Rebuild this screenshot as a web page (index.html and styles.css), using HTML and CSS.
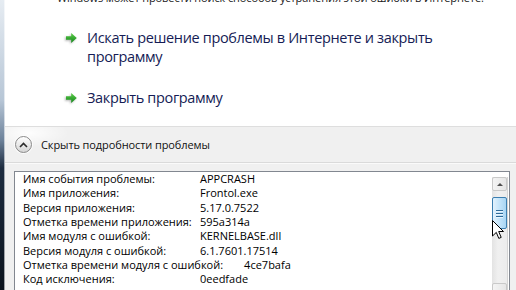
FILE: index.html
```html
<!DOCTYPE html>
<html lang="ru">
<head>
    <meta charset="UTF-8">
    <meta name="viewport" content="width=device-width, initial-scale=1.0">
    <title>Frontol.exe</title>
    <link rel="stylesheet" href="styles.css">
</head>
<body>
    <div class="frame-edge"></div>

    <div class="dialog">
        <div class="intro">Windows может провести поиск способов устранения этой ошибки в Интернете.</div>

        <div class="commands">
            <div class="command">
                <svg class="command-arrow" width="13" height="12" viewBox="0 0 13 12">
                    <defs>
                        <linearGradient id="arrowFill" x1="0" y1="0" x2="0" y2="1">
                            <stop offset="0" stop-color="#5fcf4a"/>
                            <stop offset="1" stop-color="#12861c"/>
                        </linearGradient>
                    </defs>
                    <path d="M1 4.2 H6.2 V1 L11.8 6 L6.2 11 V7.8 H1 Z" fill="url(#arrowFill)"/>
                </svg>
                <span class="command-text">Искать решение проблемы в Интернете и закрыть программу</span>
            </div>
            <div class="command">
                <svg class="command-arrow" width="13" height="12" viewBox="0 0 13 12">
                    <path d="M1 4.2 H6.2 V1 L11.8 6 L6.2 11 V7.8 H1 Z" fill="url(#arrowFill)"/>
                </svg>
                <span class="command-text">Закрыть программу</span>
            </div>
        </div>

        <div class="footer">
            <div class="toggle">
                <span class="toggle-button">
                    <svg width="9" height="6" viewBox="0 0 9 6">
                        <polyline points="1,5 4.5,1.5 8,5" fill="none" stroke="#2b2b2b" stroke-width="1.6"/>
                    </svg>
                </span>
                <span class="toggle-label">Скрыть подробности проблемы</span>
            </div>

            <div class="details">
                <div class="rows">
                    <div class="row"><span class="label">Имя события проблемы:</span><span>APPCRASH</span></div>
                    <div class="row"><span class="label">Имя приложения:</span><span>Frontol.exe</span></div>
                    <div class="row"><span class="label">Версия приложения:</span><span>5.17.0.7522</span></div>
                    <div class="row"><span class="label">Отметка времени приложения:</span><span>595a314a</span></div>
                    <div class="row"><span class="label">Имя модуля с ошибкой:</span><span>KERNELBASE.dll</span></div>
                    <div class="row"><span class="label">Версия модуля с ошибкой:</span><span>6.1.7601.17514</span></div>
                    <div class="row row-wide"><span class="label">Отметка времени модуля с ошибкой:</span><span>4ce7bafa</span></div>
                    <div class="row"><span class="label">Код исключения:</span><span>0eedfade</span></div>
                </div>
                <div class="scrollbar">
                    <div class="scroll-btn"><span class="scroll-up"></span></div>
                    <div class="scroll-thumb">
                        <span class="grip"></span>
                        <span class="grip"></span>
                        <span class="grip"></span>
                    </div>
                    <div class="scroll-track"></div>
                    <div class="scroll-btn"></div>
                </div>
            </div>
        </div>
    </div>

    <svg class="cursor" width="13" height="20" viewBox="0 0 13 20">
        <path d="M0.5 0.5 V16 L4.3 12.4 L6.8 18.4 L9.2 17.4 L6.7 11.5 H11.5 Z" fill="#fff" stroke="#000" stroke-width="1" stroke-linejoin="round"/>
    </svg>
</body>
</html>
```

FILE: styles.css
```css
body {
    margin: 0;
    width: 516px;
    height: 290px;
    overflow: hidden;
    display: flex;
    position: relative;
    background-color: #fff;
    font-family: 'Open Sans', 'Noto Sans', sans-serif;
    color: #000;
}

.frame-edge {
    flex: none;
    width: 5px;
    background: linear-gradient(to bottom, #e6ecf2 0, #b7c6d6 100px, #6d829a 140px, #1d2c40 168px, #0b131d 290px);
    box-shadow: inset -1px 0 0 rgba(255, 255, 255, 0.6);
}

.dialog {
    flex: 1;
    display: flex;
    flex-direction: column;
    min-width: 0;
}

.intro {
    flex: none;
    margin: -10px 0 0 52px;
    font-size: 11px;
    letter-spacing: -0.1px;
    line-height: 15px;
    white-space: nowrap;
    color: #1a1a1a;
}

.commands {
    flex: none;
    height: 98px;
    padding: 23px 0 0 60px;
    display: flex;
    flex-direction: column;
    gap: 22px;
}

.command {
    display: flex;
    align-items: flex-start;
    gap: 9px;
    color: #151c55;
    font-size: 14.5px;
    letter-spacing: -0.35px;
    line-height: 19px;
}

.command-text {
    width: 360px;
}

.command-arrow {
    flex: none;
    margin-top: 4px;
    filter: drop-shadow(-1px 1px 1px rgba(0, 0, 0, 0.3));
}

.footer {
    flex: 1;
    min-height: 0;
    background-color: #f0f0f0;
    border-top: 1px solid #dedede;
    display: flex;
    flex-direction: column;
}

.toggle {
    flex: none;
    height: 35px;
    display: flex;
    align-items: center;
    padding-left: 10px;
    gap: 9px;
    border-bottom: 1px solid #dadada;
    box-shadow: 0 1px 0 #fafafa;
    background: radial-gradient(ellipse 40px 14px at 24px 6px, rgba(255, 255, 255, 0.9), rgba(255, 255, 255, 0));
}

.toggle-button {
    width: 15px;
    height: 15px;
    border: 1px solid #8a8a8a;
    border-radius: 50%;
    background: linear-gradient(to bottom, #ffffff, #e9e9e9 50%, #d6d6d6);
    display: flex;
    align-items: center;
    justify-content: center;
    box-shadow: 0 0 0 1px rgba(255, 255, 255, 0.8);
}

.toggle-label {
    font-size: 11px;
    letter-spacing: -0.1px;
    color: #111;
}

.details {
    flex: 1;
    min-height: 0;
    overflow: hidden;
    margin: 8px 6px 0 9px;
    border: 1px solid #828790;
    border-bottom: none;
    background-color: #fff;
    display: flex;
}

.rows {
    flex: 1;
    padding-left: 8px;
    font-size: 11px;
    line-height: 14.35px;
    white-space: nowrap;
}

.row {
    display: flex;
}

.label {
    min-width: 177px;
}

.row-wide .label {
    padding-right: 21px;
}

.scrollbar {
    flex: none;
    width: 15px;
    margin: 5px 1px 0 0;
    display: flex;
    flex-direction: column;
    background: linear-gradient(to right, #e3e3e3, #f0f0f0 40%, #ececec);
    border-right: 1px solid #d4d4d4;
}

.scroll-btn {
    flex: none;
    height: 12px;
    border: 1px solid #c9c9c9;
    border-radius: 2px;
    background: linear-gradient(to right, #f4f4f4, #e6e6e6);
    display: flex;
    align-items: center;
    justify-content: center;
}

.scroll-up {
    width: 0;
    height: 0;
    border-left: 3px solid transparent;
    border-right: 3px solid transparent;
    border-bottom: 3px solid #4f4f4f;
}

.scroll-thumb {
    flex: none;
    margin-top: 6px;
    height: 30px;
    border: 1px solid #3c7fb1;
    border-radius: 2px;
    background: linear-gradient(to right, #e3f2fd, #c3e4fa 50%, #a9d5f3);
    display: flex;
    flex-direction: column;
    align-items: center;
    justify-content: center;
    gap: 2px;
}

.grip {
    width: 7px;
    height: 1px;
    background-color: #2f6a98;
    box-shadow: 0 1px 0 #e9f5fe;
}

.scroll-track {
    flex: none;
    height: 54px;
}

.cursor {
    position: absolute;
    left: 492px;
    top: 220px;
}
```
